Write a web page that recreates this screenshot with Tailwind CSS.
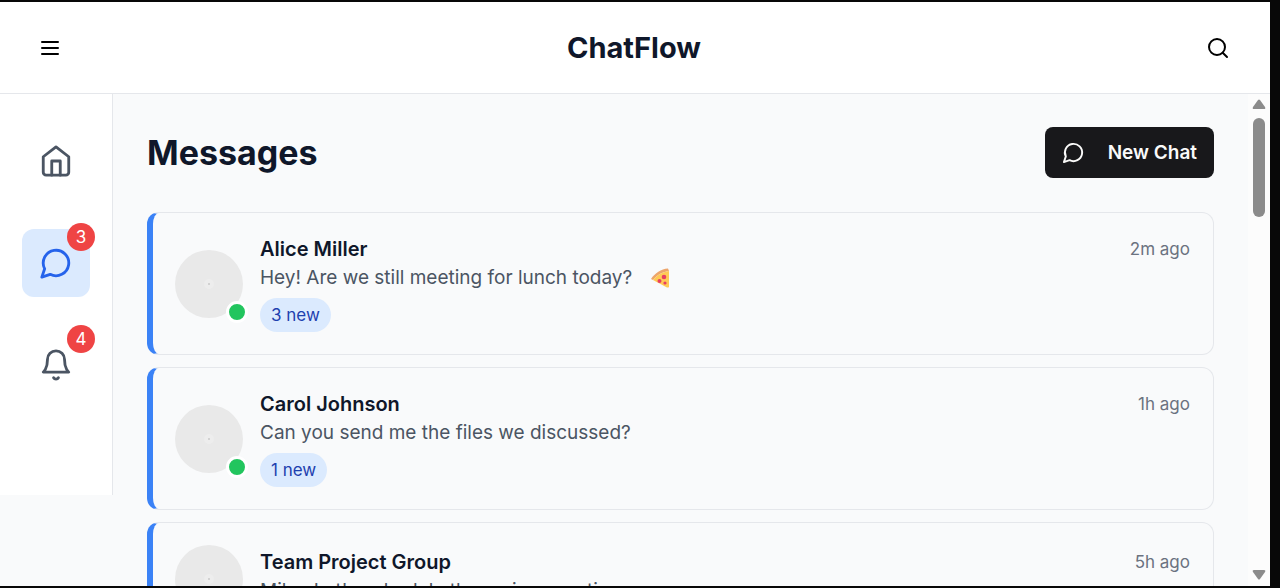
<!DOCTYPE html>
<html lang="en">
<head>
<meta charset="utf-8">
<meta name="viewport" content="width=device-width, initial-scale=1">
<title>ChatFlow</title>
<script src="https://cdn.jsdelivr.net/npm/@tailwindcss/browser@4"></script>
</head>
<body class="bg-[#080808] font-['Inter',sans-serif] text-[#0f172a]">
<div class="h-screen py-[2px] pr-[10px]">
<div class="flex h-full flex-col overflow-hidden bg-[#f9fafb]">

  <header class="flex h-[92px] shrink-0 items-center justify-between border-b border-[#e5e7eb] bg-white pr-[40px] pl-[38px]">
    <button type="button" aria-label="Menu" class="text-black">
      <svg class="size-[24px]" viewBox="0 0 24 24" fill="none" stroke="currentColor" stroke-width="2" stroke-linecap="round" stroke-linejoin="round"><path d="M4 6h16M4 12h16M4 18h16"/></svg>
    </button>
    <h1 class="text-[29px] leading-9 font-bold">ChatFlow</h1>
    <button type="button" aria-label="Search" class="text-black">
      <svg class="size-[24px]" viewBox="0 0 24 24" fill="none" stroke="currentColor" stroke-width="2" stroke-linecap="round" stroke-linejoin="round"><circle cx="11" cy="11" r="8"/><path d="m21 21-4.3-4.3"/></svg>
    </button>
  </header>

  <div class="flex min-h-0 flex-1">
    <nav aria-label="Main" class="flex w-[113px] shrink-0 flex-col items-center gap-[34px] self-start border-r border-[#e5e7eb] bg-white pt-[33px] pb-[96px] text-[#4b5563]">
      <a href="#home" aria-label="Home" class="flex size-[68px] items-center justify-center rounded-xl">
        <svg class="size-[34px]" viewBox="0 0 24 24" fill="none" stroke="currentColor" stroke-width="2" stroke-linecap="round" stroke-linejoin="round"><path d="m3 9 9-7 9 7v11a2 2 0 0 1-2 2H5a2 2 0 0 1-2-2z"/><path d="M9 22V12h6v10"/></svg>
      </a>
      <a href="#messages" aria-label="Messages, 3 unread" class="relative flex size-[68px] items-center justify-center rounded-xl bg-[#dbeafe] text-[#2563eb]">
        <svg class="size-[34px]" viewBox="0 0 24 24" fill="none" stroke="currentColor" stroke-width="2" stroke-linecap="round" stroke-linejoin="round"><path d="M7.900 20A9 9 0 1 0 4 16.100L2 22Z"/></svg>
        <span class="absolute -top-[6px] -right-[5px] flex size-[28px] items-center justify-center rounded-full bg-[#ef4444] text-[17px] leading-6 text-white">3</span>
      </a>
      <a href="#notifications" aria-label="Notifications, 4 unread" class="relative flex size-[68px] items-center justify-center rounded-xl">
        <svg class="size-[34px]" viewBox="0 0 24 24" fill="none" stroke="currentColor" stroke-width="2" stroke-linecap="round" stroke-linejoin="round"><path d="M6 8a6 6 0 0 1 12 0c0 7 3 9 3 9H3s3-2 3-9"/><path d="M10.300 21a1.940 1.940 0 0 0 3.400 0"/></svg>
        <span class="absolute -top-[6px] -right-[5px] flex size-[28px] items-center justify-center rounded-full bg-[#ef4444] text-[17px] leading-6 text-white">4</span>
      </a>
    </nav>

    <main class="min-w-0 flex-1 overflow-hidden px-[34px] pt-[33px]">
      <div class="mb-[34px] flex items-center justify-between">
        <h2 class="text-[34px] leading-10 font-bold">Messages</h2>
        <button type="button" class="flex h-[51px] items-center gap-[23px] rounded-lg bg-[#18181b] px-[17px] text-[19px] leading-7 font-semibold text-[#fafafa]">
          <svg class="size-[23px]" viewBox="0 0 24 24" fill="none" stroke="currentColor" stroke-width="2" stroke-linecap="round" stroke-linejoin="round"><path d="M7.900 20A9 9 0 1 0 4 16.100L2 22Z"/></svg>
          New Chat
        </button>
      </div>

      <ul class="flex flex-col gap-[12px]">
        <li class="flex items-center gap-[17px] rounded-xl border border-l-6 border-[#e5e7eb] border-l-[#3b82f6] py-[22px] pr-[23px] pl-[22px]">
          <div class="relative size-[68px] shrink-0 rounded-full bg-[#e9e9e9]">
            <span class="absolute inset-0 m-auto size-[10px] rounded-full bg-[#ededed]"></span>
            <span class="absolute inset-0 m-auto size-[2px] rounded-full bg-[#c8c8c8]"></span>
            <span class="absolute -right-[5px] -bottom-[5px] size-[22px] rounded-full border-3 border-white bg-[#22c55e]"></span>
          </div>
          <div class="min-w-0 flex-1">
            <div class="flex items-center justify-between">
              <h3 class="text-[20px] leading-7 font-semibold">Alice Miller</h3>
              <time class="text-[17px] leading-7 text-[#6b7280]">2m ago</time>
            </div>
            <p class="mt-px flex items-center gap-[18px] text-[19px] leading-7 text-[#4b5563]">Hey! Are we still meeting for lunch today?
              <svg role="img" aria-label="pizza" class="size-[20px]" viewBox="0 0 20 20"><path d="M1 11C5 5 11 1 18 0.500L19 3C12 4 7 7 3 12Z" fill="#eda56b"/><path d="M3 12C7 7 12 4 19 3V19Q18 20 16 19Z" fill="#ffca55"/><circle cx="14" cy="9" r="2.300" fill="#e83e62"/><circle cx="9.500" cy="13" r="2" fill="#e83e62"/><circle cx="15" cy="15" r="1.600" fill="#e83e62"/></svg>
            </p>
            <div class="mt-[6px] flex"><span class="rounded-full bg-[#dbeafe] px-[11px] py-[3px] text-[17px] leading-7 text-[#1e40af]">3 new</span></div>
          </div>
        </li>
        <li class="flex items-center gap-[17px] rounded-xl border border-l-6 border-[#e5e7eb] border-l-[#3b82f6] py-[22px] pr-[23px] pl-[22px]">
          <div class="relative size-[68px] shrink-0 rounded-full bg-[#e9e9e9]">
            <span class="absolute inset-0 m-auto size-[10px] rounded-full bg-[#ededed]"></span>
            <span class="absolute inset-0 m-auto size-[2px] rounded-full bg-[#c8c8c8]"></span>
            <span class="absolute -right-[5px] -bottom-[5px] size-[22px] rounded-full border-3 border-white bg-[#22c55e]"></span>
          </div>
          <div class="min-w-0 flex-1">
            <div class="flex items-center justify-between">
              <h3 class="text-[20px] leading-7 font-semibold">Carol Johnson</h3>
              <time class="text-[17px] leading-7 text-[#6b7280]">1h ago</time>
            </div>
            <p class="mt-px text-[19px] leading-7 text-[#4b5563]">Can you send me the files we discussed?</p>
            <div class="mt-[6px] flex"><span class="rounded-full bg-[#dbeafe] px-[11px] py-[3px] text-[17px] leading-7 text-[#1e40af]">1 new</span></div>
          </div>
        </li>
        <li class="flex items-center gap-[17px] rounded-xl border border-l-6 border-[#e5e7eb] border-l-[#3b82f6] py-[22px] pr-[23px] pl-[22px]">
          <div class="relative size-[68px] shrink-0 rounded-full bg-[#e9e9e9]">
            <span class="absolute inset-0 m-auto size-[10px] rounded-full bg-[#ededed]"></span>
            <span class="absolute inset-0 m-auto size-[2px] rounded-full bg-[#c8c8c8]"></span>
          </div>
          <div class="min-w-0 flex-1 pb-[6px]">
            <div class="flex items-center justify-between">
              <h3 class="text-[20px] leading-7 font-semibold">Team Project Group</h3>
              <time class="text-[17px] leading-7 text-[#6b7280]">5h ago</time>
            </div>
            <p class="mt-px text-[19px] leading-7 text-[#4b5563]">Mike: Let's schedule the review meeting</p>
          </div>
        </li>
      </ul>
    </main>

    <div aria-hidden="true" class="flex w-[22px] shrink-0 flex-col items-center bg-[#fcfcfc] pt-[5px] pb-[6px]">
      <svg class="h-[10px] w-[14px]" viewBox="0 0 14 10"><path d="M6 1Q7 0 8 1L13 8Q14 10 12 10H2Q0 10 1 8Z" fill="#8b8b8b"/></svg>
      <div class="mt-[9px] h-[99px] w-[12px] rounded-full bg-[#8b8b8b]"></div>
      <svg class="mt-auto h-[10px] w-[14px]" viewBox="0 0 14 10"><path d="M6 9Q7 10 8 9L13 2Q14 0 12 0H2Q0 0 1 2Z" fill="#8b8b8b"/></svg>
    </div>
  </div>
</div>
</div>
</body>
</html>
